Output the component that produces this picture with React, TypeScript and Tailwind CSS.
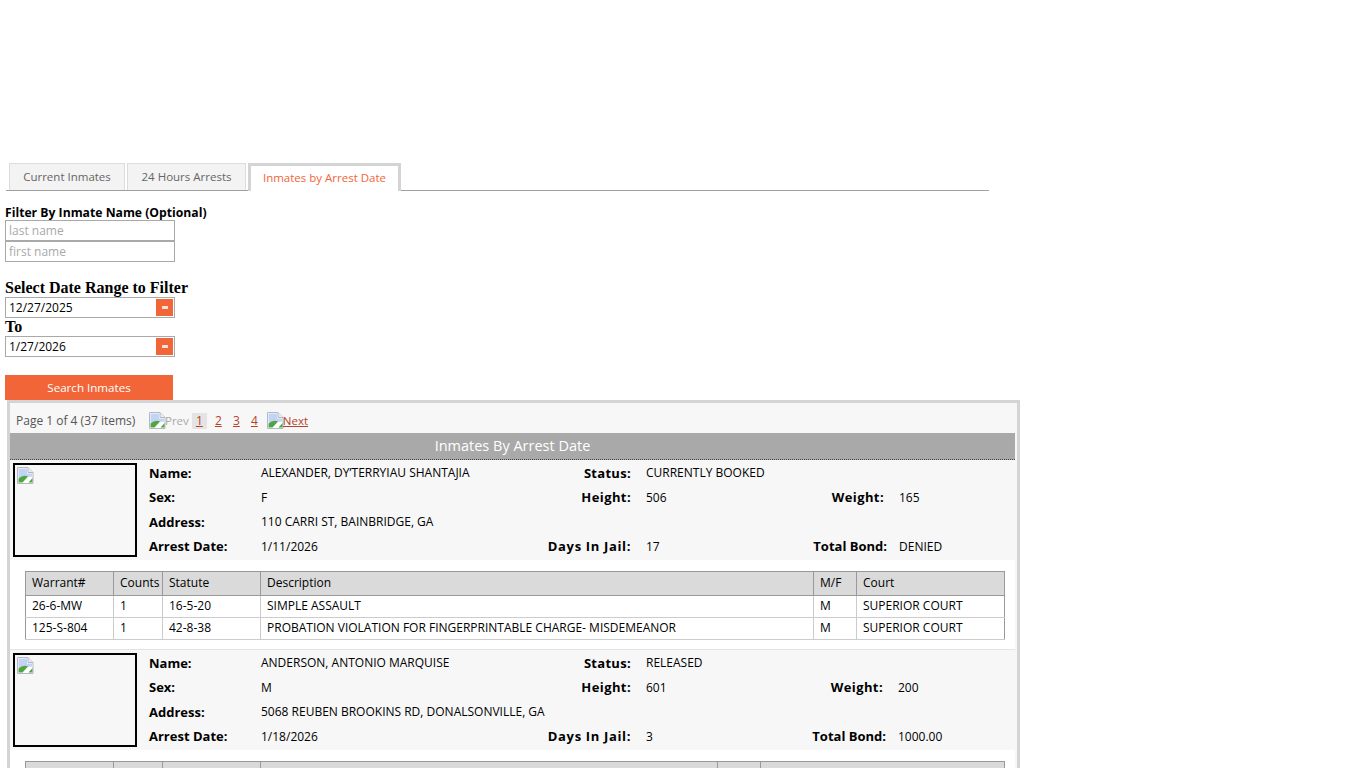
import React from 'react';

const BODY_FONT = "font-['Open_Sans','Noto_Sans',sans-serif]";

type Charge = { warrant: string; counts: string; statute: string; description: string; mf: string; court: string };
type Inmate = {
	name: string;
	status: string;
	sex: string;
	height: string;
	weight: string;
	address: string;
	arrestDate: string;
	days: string;
	bond: string;
	gridCols: string;
	courtCol: string;
	charges: Charge[];
};

const INMATES: Inmate[] = [
	{
		name: 'ALEXANDER, DY’TERRYIAU SHANTAJIA',
		status: 'CURRENTLY BOOKED',
		sex: 'F',
		height: '506',
		weight: '165',
		address: '110 CARRI ST, BAINBRIDGE, GA',
		arrestDate: '1/11/2026',
		days: '17',
		bond: 'DENIED',
		gridCols: 'grid-cols-[112px_308px_62px_200px_53px_1fr]',
		courtCol: 'w-[148px]',
		charges: [
			{ warrant: '26-6-MW', counts: '1', statute: '16-5-20', description: 'SIMPLE ASSAULT', mf: 'M', court: 'SUPERIOR COURT' },
			{
				warrant: '125-S-804',
				counts: '1',
				statute: '42-8-38',
				description: 'PROBATION VIOLATION FOR FINGERPRINTABLE CHARGE- MISDEMEANOR',
				mf: 'M',
				court: 'SUPERIOR COURT',
			},
		],
	},
	{
		name: 'ANDERSON, ANTONIO MARQUISE',
		status: 'RELEASED',
		sex: 'M',
		height: '601',
		weight: '200',
		address: '5068 REUBEN BROOKINS RD, DONALSONVILLE, GA',
		arrestDate: '1/18/2026',
		days: '3',
		bond: '1000.00',
		gridCols: 'grid-cols-[112px_308px_62px_199px_53px_1fr]',
		courtCol: 'w-[244px]',
		charges: [],
	},
];

// Chrome's broken image placeholder
const BrokenImage = () => (
	<svg width="17" height="17" viewBox="0 0 17 17" className="shrink-0">
		<path d="M.5 .5H11L16 5.5V16.5H.5Z" fill="#fff" stroke="#b4b8c0" />
		<path d="M11 .5V5.5H16" fill="#e6eaf2" stroke="#b4b8c0" />
		<path d="M1.5 1.5H10V6.5H15V9.5L1.5 11Z" fill="#c2d3f5" />
		<path d="M1.5 15.5V11.5Q6 7.5 11 9.5L5.5 15.5Z" fill="#4fa53f" />
		<path d="M11.5 15.5L15.5 11V15.5Z" fill="#4fa53f" />
	</svg>
);

const Tabs = () => (
	<div className="ml-[6px] flex h-[28px] w-[983px] items-end border-b border-[#a0a0a0] pl-[3px] text-[11.5px]">
		<div className="mr-[2px] flex h-[27px] w-[116px] items-center justify-center border border-b-0 border-[#dcdcdc] bg-[#f3f3f3] text-[#666]">
			Current Inmates
		</div>
		<div className="mr-[2px] flex h-[27px] w-[119px] items-center justify-center border border-b-0 border-[#dcdcdc] bg-[#f3f3f3] text-[#666]">
			24 Hours Arrests
		</div>
		<div className="mb-[-1px] flex h-[28px] w-[153px] items-center justify-center border-[3px] border-b-0 border-[#d4d4d4] bg-white pb-[2px] text-[#f26539]">
			Inmates by Arrest Date
		</div>
	</div>
);

const DateField = ({ value }: { value: string }) => (
	<div className="flex h-[21px] w-[170px] items-center justify-between border border-[#a9a9a9] pl-[3px] pr-px text-[12px] text-black">
		<span>{value}</span>
		<span className="flex h-[17px] w-[17px] items-center justify-center bg-[#f26539]">
			<span className="h-[3px] w-[6px] bg-[#f9e0d6]" />
		</span>
	</div>
);

const Filters = () => (
	<div className="ml-[5px] w-[200px]">
		<div className="mt-[14px] h-[15px] whitespace-nowrap text-[12.2px] font-bold leading-[16px] text-black">
			Filter By Inmate Name (Optional)
		</div>
		<input
			placeholder="last name"
			className="block h-[21px] w-[170px] border border-[#a9a9a9] px-[3px] text-[12px] outline-none placeholder:text-[#a9a9a9]"
		/>
		<input
			placeholder="first name"
			className="block h-[21px] w-[170px] border border-[#a9a9a9] px-[3px] text-[12px] outline-none placeholder:text-[#a9a9a9]"
		/>
		<div className="mt-[17px] h-[18px] whitespace-nowrap font-['Liberation_Serif',serif] text-[16px] font-bold leading-[18px] text-black">
			Select Date Range to Filter
		</div>
		<DateField value="12/27/2025" />
		<div className="h-[18px] font-['Liberation_Serif',serif] text-[16px] font-bold leading-[18px] text-black">To</div>
		<DateField value="1/27/2026" />
		<div className="mt-[18px] flex h-[25px] w-[168px] items-center justify-center bg-[#f26539] text-[11.6px] text-white">
			Search Inmates
		</div>
	</div>
);

const Pager = () => (
	<div className="flex h-[30px] items-center pl-[6px] pt-[5px] text-[12px]">
		<span className="w-[133px] text-[#555]">Page 1 of 4 (37 items)</span>
		<span className="flex items-center text-[11.5px] text-[#aaa]">
			<BrokenImage />
			<span className="ml-[-1px]">Prev</span>
		</span>
		<span className="ml-[3px] flex h-[16px] w-[15px] items-center justify-center bg-[#e4e4e4] text-[#b5432a] underline">1</span>
		<a className="ml-[5px] w-[13px] text-center text-[#b5432a] underline">2</a>
		<a className="ml-[5px] w-[13px] text-center text-[#b5432a] underline">3</a>
		<a className="ml-[5px] w-[13px] text-center text-[#b5432a] underline">4</a>
		<span className="ml-[6px] flex items-center text-[11.5px] text-[#b5432a] underline">
			<BrokenImage />
			<span className="ml-[-1px]">Next</span>
		</span>
	</div>
);

const Field = ({ label, value, labelClass, valueClass }: { label: string; value: string; labelClass: string; valueClass: string }) => (
	<>
		<span className={`${labelClass} whitespace-nowrap text-[13px] font-bold text-black`}>{label}</span>
		<span className={`${valueClass} whitespace-nowrap text-[12px] text-black`}>{value}</span>
	</>
);

const ChargeTable = ({ charges, courtCol }: { charges: Charge[]; courtCol: string }) => (
	<table className="ml-[15px] w-[980px] table-fixed border-collapse border border-[#999] text-[12px] text-black">
		<colgroup>
			<col className="w-[88px]" />
			<col className="w-[49px]" />
			<col className="w-[98px]" />
			<col />
			<col className="w-[43px]" />
			<col className={courtCol} />
		</colgroup>
		<thead>
			<tr className="h-[24px] bg-[#dadada] text-left font-normal">
				{['Warrant#', 'Counts', 'Statute', 'Description', 'M/F', 'Court'].map((heading) => (
					<th key={heading} className="whitespace-nowrap border-x border-b border-[#999] px-[6px] pb-[2px] font-normal">
						{heading}
					</th>
				))}
			</tr>
		</thead>
		<tbody>
			{charges.map((charge) => (
				<tr key={charge.warrant} className="h-[22px] bg-white">
					{[charge.warrant, charge.counts, charge.statute, charge.description, charge.mf, charge.court].map((cell, i) => (
						<td key={i} className="whitespace-nowrap border border-[#ccc] px-[6px] pb-[2px] first:border-l-[#999] last:border-r-[#999]">
							{cell}
						</td>
					))}
				</tr>
			))}
		</tbody>
	</table>
);

const InmateCard = ({ inmate }: { inmate: Inmate }) => (
	<div className="h-[190px] border-b border-[#e4e4e4] bg-white">
		<div className="flex h-[100px] bg-[#f7f7f7] pl-[3px]">
			<div className="mt-[3px] h-[94px] w-[124px] shrink-0 border-2 border-black p-[2px]">
				<BrokenImage />
			</div>
			<div className={`ml-[12px] mt-[1px] grid h-[98px] flex-1 ${inmate.gridCols} grid-rows-[24.5px_24.5px_24.5px_24.5px] items-center`}>
				<Field label="Name:" value={inmate.name} labelClass="" valueClass="" />
				<Field label="Status:" value={inmate.status} labelClass="justify-self-end tracking-[0.3px]" valueClass="col-span-3 pl-[15px]" />
				<Field label="Sex:" value={inmate.sex} labelClass="" valueClass="" />
				<Field label="Height:" value={inmate.height} labelClass="justify-self-end tracking-[0.4px]" valueClass="pl-[15px]" />
				<Field label="Weight:" value={inmate.weight} labelClass="justify-self-end tracking-[0.4px]" valueClass="pl-[15px]" />
				<Field label="Address:" value={inmate.address} labelClass="" valueClass="col-span-5" />
				<Field label="Arrest Date:" value={inmate.arrestDate} labelClass="" valueClass="" />
				<Field label="Days In Jail:" value={inmate.days} labelClass="justify-self-end tracking-[0.65px]" valueClass="pl-[15px]" />
				<Field label="Total Bond:" value={inmate.bond} labelClass="mr-[-3px] justify-self-end" valueClass="pl-[15px]" />
			</div>
		</div>
		<div className="pt-[11px]">
			<ChargeTable charges={inmate.charges} courtCol={inmate.courtCol} />
		</div>
	</div>
);

export default function App() {
	return (
		<div className={`h-[768px] w-[1366px] overflow-hidden bg-white pt-[163px] ${BODY_FONT}`}>
			<Tabs />
			<Filters />
			<div className="ml-[7px] w-[1013px] border-[3px] border-b-0 border-[#d4d4d4] bg-[#f7f7f7] pr-[2px]">
				<Pager />
				<div className="flex h-[27px] items-center justify-center border-b border-dotted border-[#444] bg-[#a9a9a9] text-[14.5px] text-white">
					Inmates By Arrest Date
				</div>
				{INMATES.map((inmate) => (
					<InmateCard key={inmate.name} inmate={inmate} />
				))}
			</div>
		</div>
	);
}
